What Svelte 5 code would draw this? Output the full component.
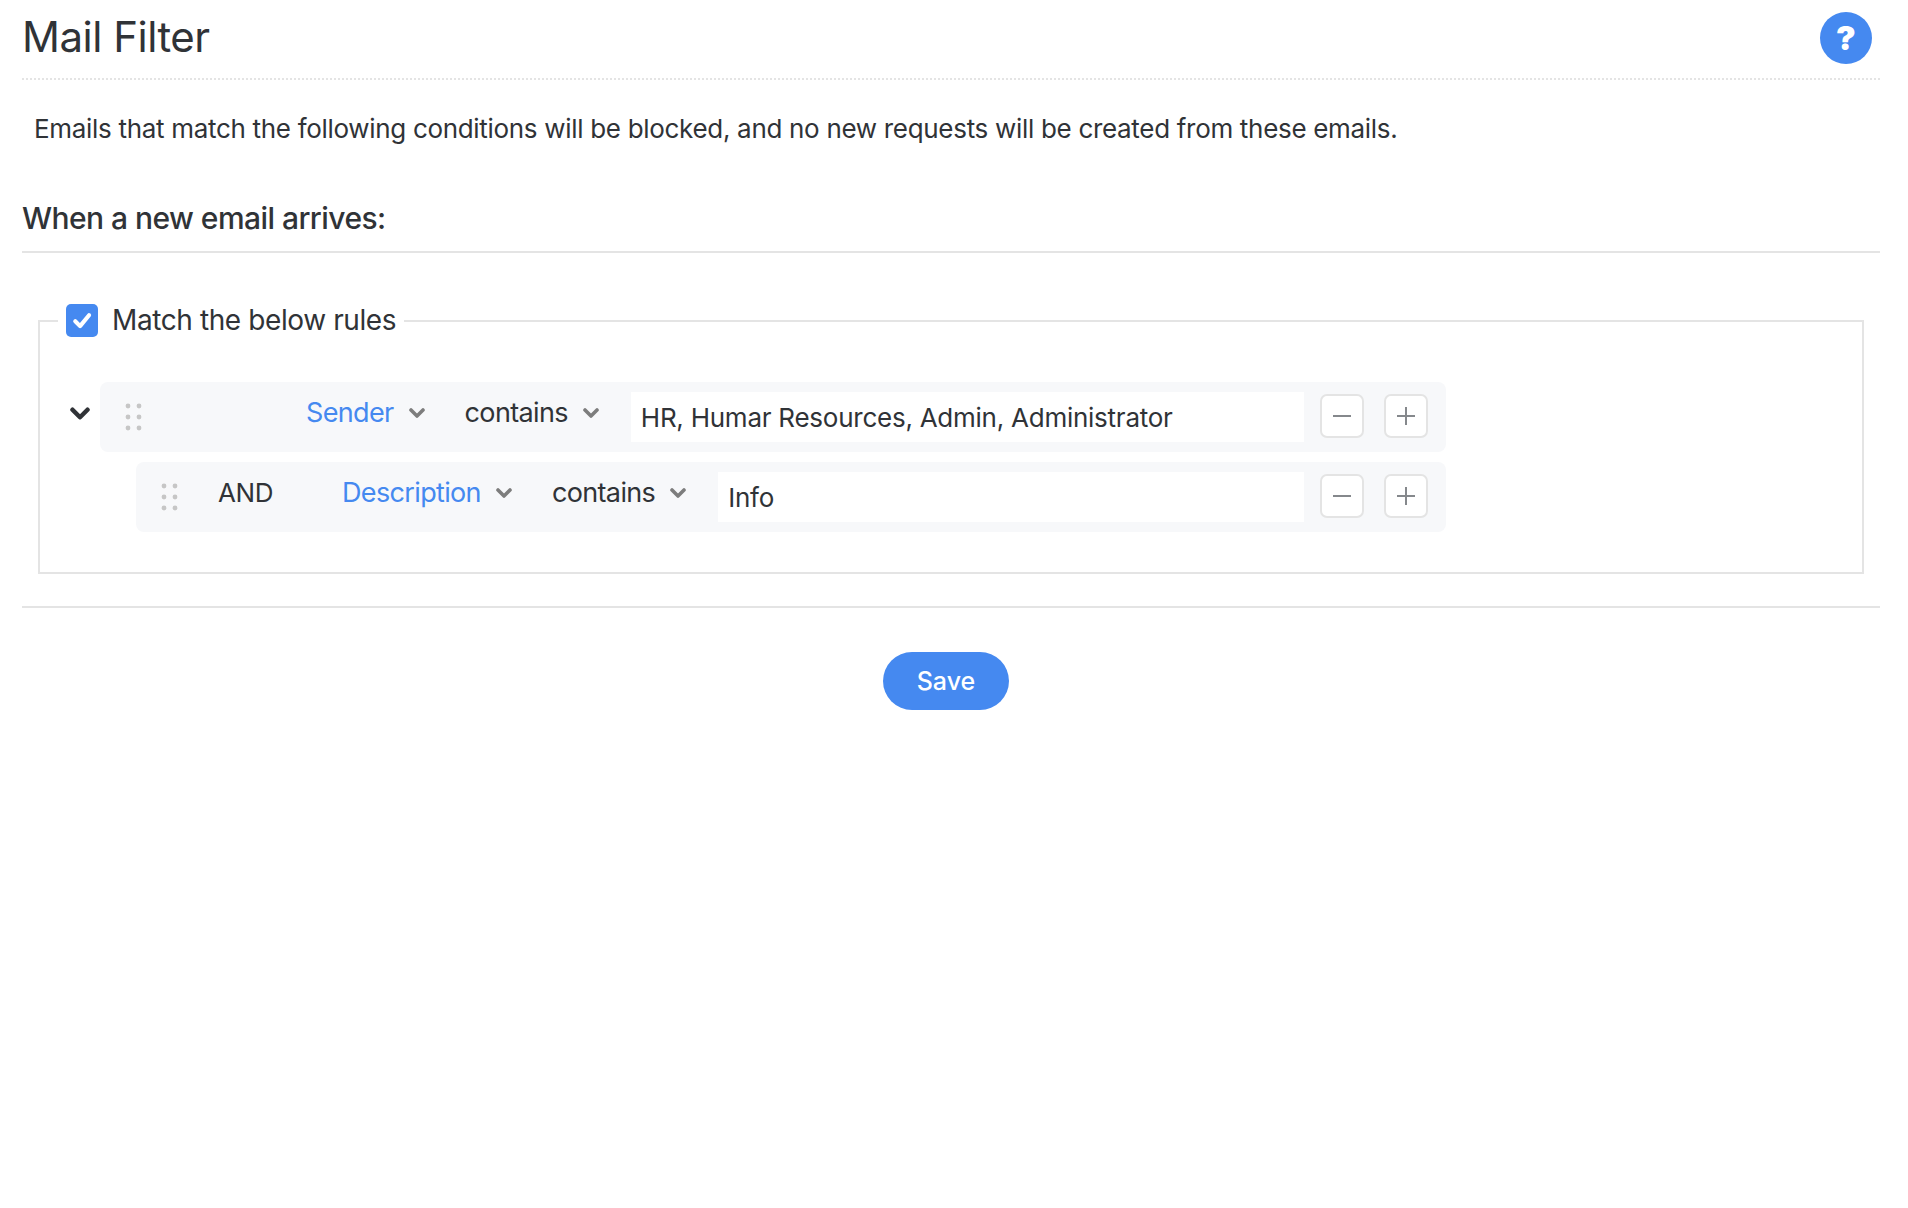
<script>
    const rules = [
        { id: 1, join: "", field: "Sender", op: "contains", value: "HR, Humar Resources, Admin, Administrator" },
        { id: 2, join: "AND", field: "Description", op: "contains", value: "Info" }
    ];
</script>

{#snippet arrow(cls)}
    <svg class={cls} viewBox="0 0 16 10" aria-hidden="true">
        <path d="M2 2l6 6 6-6" fill="none" stroke="currentColor" stroke-width="3.6" stroke-linecap="round" stroke-linejoin="round" />
    </svg>
{/snippet}

<div class="page">
    <header class="top">
        <h1>Mail Filter</h1>
        <button class="help" aria-label="Help">?</button>
    </header>

    <p class="intro">Emails that match the following conditions will be blocked, and no new requests will be created from these emails.</p>

    <h2>When a new email arrives:</h2>

    <fieldset class="box">
        <legend>
            <span class="check">
                <svg viewBox="0 0 20 20" aria-hidden="true">
                    <path d="M5.8 10.5l3 3 5.6-6.8" fill="none" stroke="#fff" stroke-width="2.6" stroke-linecap="round" stroke-linejoin="round" />
                </svg>
            </span>
            Match the below rules
        </legend>

        <div class="rules">
            {#each rules as rule, i}
                <div class="line" class:child={i > 0}>
                    {#if i === 0}
                        <span class="toggle">{@render arrow("toggle-icon")}</span>
                    {/if}
                    <div class="rule">
                        <svg class="drag" viewBox="0 0 17 28" aria-hidden="true">
                            {#each [3, 14, 25] as y}
                                <circle cx="3" cy={y} r="2.4" />
                                <circle cx="14" cy={y} r="2.4" />
                            {/each}
                        </svg>
                        <span class="join">{rule.join}</span>
                        <span class="select field">{rule.field}{@render arrow("caret")}</span>
                        <span class="select op">{rule.op}{@render arrow("caret")}</span>
                        <input class="value" value={rule.value} />
                        <button class="square minus" aria-label="Remove">
                            <svg viewBox="0 0 20 20"><path d="M1 10h18" /></svg>
                        </button>
                        <button class="square" aria-label="Add">
                            <svg viewBox="0 0 20 20"><path d="M1 10h18M10 1v18" /></svg>
                        </button>
                    </div>
                </div>
            {/each}
        </div>
    </fieldset>

    <div class="actions">
        <button class="save">Save</button>
    </div>
</div>

<style>
    :global(body) {
        background: #fff;
        color: #303337;
        font-family: Inter, "Liberation Sans", sans-serif;
    }

    .page {
        padding: 0 28px 0 22px;
    }

    .top {
        display: flex;
        align-items: center;
        justify-content: space-between;
        height: 78px;
        padding-right: 8px;
        border-bottom: 2px dotted #e4e4e4;
    }

    h1 {
        margin: -5px 0 0;
        font-size: 42px;
        font-weight: 400;
        letter-spacing: -0.5px;
    }

    .help {
        width: 52px;
        height: 52px;
        margin-top: -2px;
        padding: 0;
        border: 0;
        border-radius: 50%;
        background: #4589f0;
        color: #fff;
        font: 900 33px Inter, sans-serif;
    }

    .intro {
        margin: 31px 0 0 12px;
        font-size: 26px;
        line-height: 36px;
        letter-spacing: -0.31px;
    }

    h2 {
        margin: 53px 0 0;
        padding-bottom: 15px;
        border-bottom: 2px solid #e4e4e4;
        font-size: 30px;
        line-height: 36px;
        font-weight: 500;
        letter-spacing: -0.55px;
    }

    .box {
        min-width: 0;
        margin: 50px 16px 0 16px;
        padding: 0 0 40px 0;
        border: 2px solid #e4e4e4;
    }

    legend {
        display: flex;
        align-items: center;
        gap: 14px;
        margin-left: 18px;
        padding: 0 8px;
        font-size: 28px;
        line-height: 35px;
        letter-spacing: -0.4px;
    }

    .check {
        display: flex;
        width: 32px;
        height: 33px;
        border-radius: 5px;
        background: #4589f0;
    }

    .check svg {
        width: 100%;
    }

    .rules {
        display: flex;
        flex-direction: column;
        gap: 10px;
        margin-top: 44px;
        padding-right: 416px;
    }

    .line {
        display: flex;
        align-items: center;
        padding-left: 60px;
    }

    .line.child {
        padding-left: 96px;
    }

    .toggle {
        display: flex;
        margin-left: -30px;
        margin-right: 10px;
        margin-top: -8px;
    }

    .toggle :global(.toggle-icon) {
        width: 20px;
        height: 13px;
    }

    .rule {
        flex: 1;
        display: flex;
        align-items: center;
        height: 70px;
        box-sizing: border-box;
        padding: 0 18px 0 25px;
        border-radius: 8px;
        background: #f7f8fa;
    }

    .drag {
        flex: none;
        width: 17px;
        height: 28px;
        fill: #c6c6c6;
    }

    .join {
        flex: none;
        width: 164px;
        box-sizing: border-box;
        padding-left: 40px;
        margin-top: -9px;
        font-size: 26px;
        letter-spacing: -0.4px;
    }

    .select {
        display: flex;
        align-items: center;
        gap: 15px;
        margin-right: 40px;
        margin-top: -9px;
        font-size: 27px;
        letter-spacing: -0.65px;
        white-space: nowrap;
    }

    .select.op {
        margin-right: 32px;
    }

    .field {
        color: #4589f0;
    }

    .select :global(.caret) {
        width: 16px;
        height: 10px;
        color: #7d7d7d;
    }

    .value {
        flex: 1;
        min-width: 0;
        height: 50px;
        box-sizing: border-box;
        margin: 0 16px 0 0;
        padding: 0 10px;
        border: 0;
        background: #fff;
        color: #303337;
        font: 400 26px Inter, sans-serif;
        letter-spacing: -0.25px;
    }

    .square {
        display: flex;
        align-items: center;
        justify-content: center;
        width: 44px;
        height: 44px;
        margin-top: -2px;
        padding: 0;
        border: 2px solid #e4e4e4;
        border-radius: 7px;
        background: #fff;
    }

    .minus {
        margin-right: 20px;
    }

    .square svg {
        width: 20px;
        height: 20px;
        fill: none;
        stroke: #85888c;
        stroke-width: 2;
    }

    .actions {
        display: flex;
        justify-content: center;
        margin-top: 32px;
        padding: 44px 10px 0 0;
        border-top: 2px solid #e4e4e4;
    }

    .save {
        width: 126px;
        height: 58px;
        padding: 0;
        border: 0;
        border-radius: 29px;
        background: #4589f0;
        color: #fff;
        font: 500 25px Inter, sans-serif;
    }
</style>
